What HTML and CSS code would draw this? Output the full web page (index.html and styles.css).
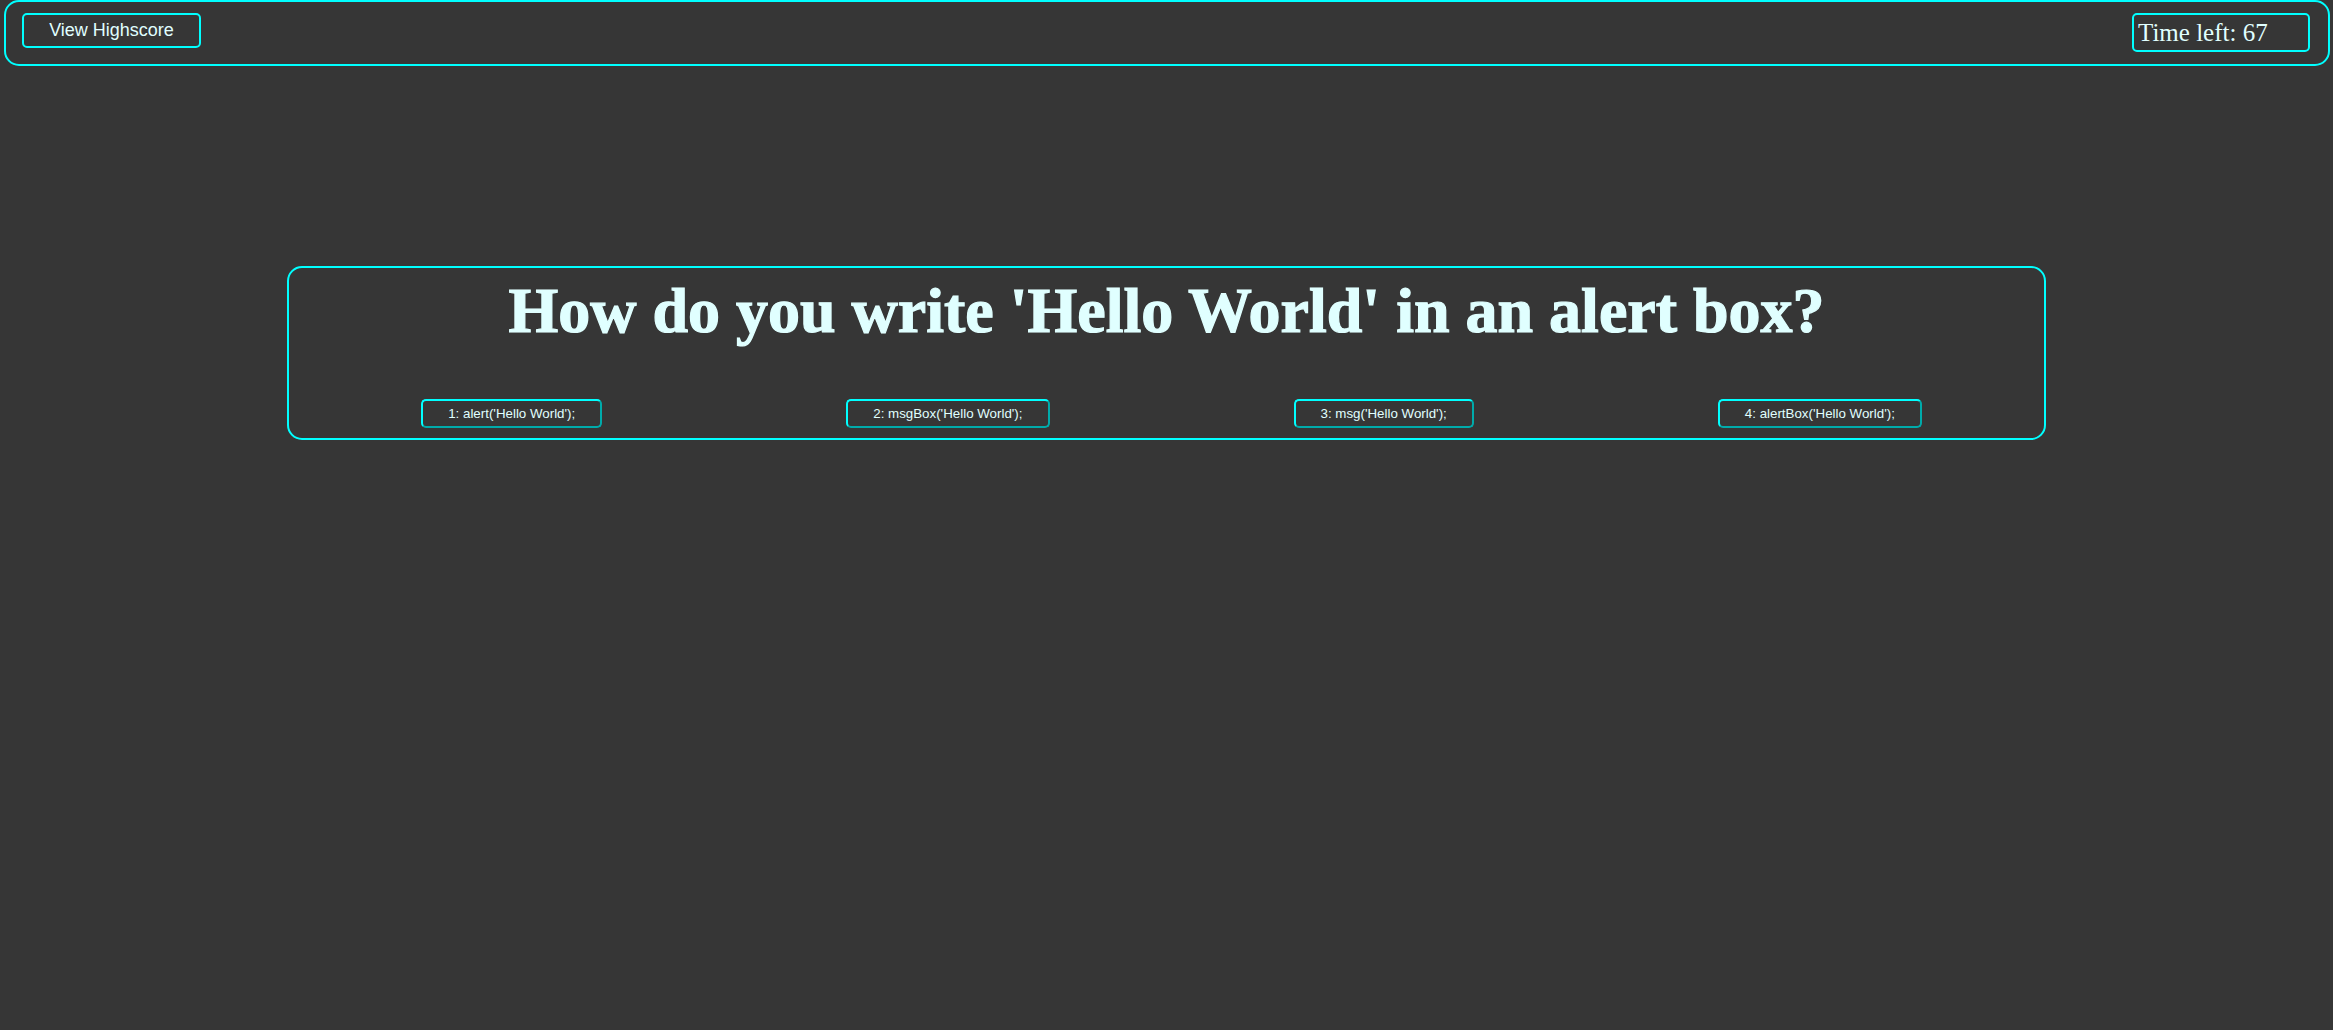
FILE: index.html
```html
<!DOCTYPE html>
<html lang="en">
<head>
<meta charset="utf-8">
<title>Quiz</title>
<link rel="stylesheet" href="styles.css">
</head>
<body>
<header class="topbar">
  <button class="highscore-btn">View Highscore</button>
  <div class="timer">Time left: 67</div>
</header>
<main class="quiz-card">
  <h1 class="question">How do you write 'Hello World' in an alert box?</h1>
  <div class="answers">
    <button class="answer">1: alert('Hello World');</button>
    <button class="answer">2: msgBox('Hello World');</button>
    <button class="answer">3: msg('Hello World');</button>
    <button class="answer">4: alertBox('Hello World');</button>
  </div>
</main>
</body>
</html>
```
FILE: styles.css
```css
html, body {
  background: #363636;
}
body {
  margin: 0;
  font-family: "Liberation Serif", "Times New Roman", serif;
  color: #e0ffff;
}
.topbar {
  margin: 0 3px 0 4px;
  height: 66px;
  box-sizing: border-box;
  border: 2px solid #00ffff;
  border-radius: 15px;
  padding: 11px 18px 0 16px;
  display: flex;
  justify-content: space-between;
  align-items: flex-start;
}
.highscore-btn {
  width: 179px;
  height: 35px;
  box-sizing: border-box;
  background: transparent;
  border: 2px solid #00ffff;
  border-radius: 5px;
  color: #e0ffff;
  font-family: "Liberation Sans", Arial, sans-serif;
  font-size: 18px;
  padding: 0;
  line-height: 31px;
}
.timer {
  width: 178px;
  height: 39px;
  box-sizing: border-box;
  border: 2px solid #00ffff;
  border-radius: 5px;
  padding: 0 4px;
  font-size: 25px;
  line-height: 35px;
}
.quiz-card {
  width: 1759px;
  box-sizing: border-box;
  margin: 200px auto 0;
  border: 2px solid #00ffff;
  border-radius: 15px;
  padding: 6px 0 10px;
}
.question {
  margin: 0;
  text-align: center;
  font-size: 64px;
  font-weight: 700;
  line-height: 74px;
  color: #e0ffff;
  -webkit-text-stroke: 1.2px #e0ffff;
}
.answers {
  margin-top: 51px;
  display: flex;
  justify-content: center;
  column-gap: 244px;
  padding-left: 10px;
}
.answer {
  background: transparent;
  border: 2px outset #00ffff;
  border-radius: 5px;
  color: #e0ffff;
  font-family: "Liberation Sans", Arial, sans-serif;
  font-size: 13.333px;
  line-height: 15px;
  padding: 5px 25px;
  height: 29px;
}
```
